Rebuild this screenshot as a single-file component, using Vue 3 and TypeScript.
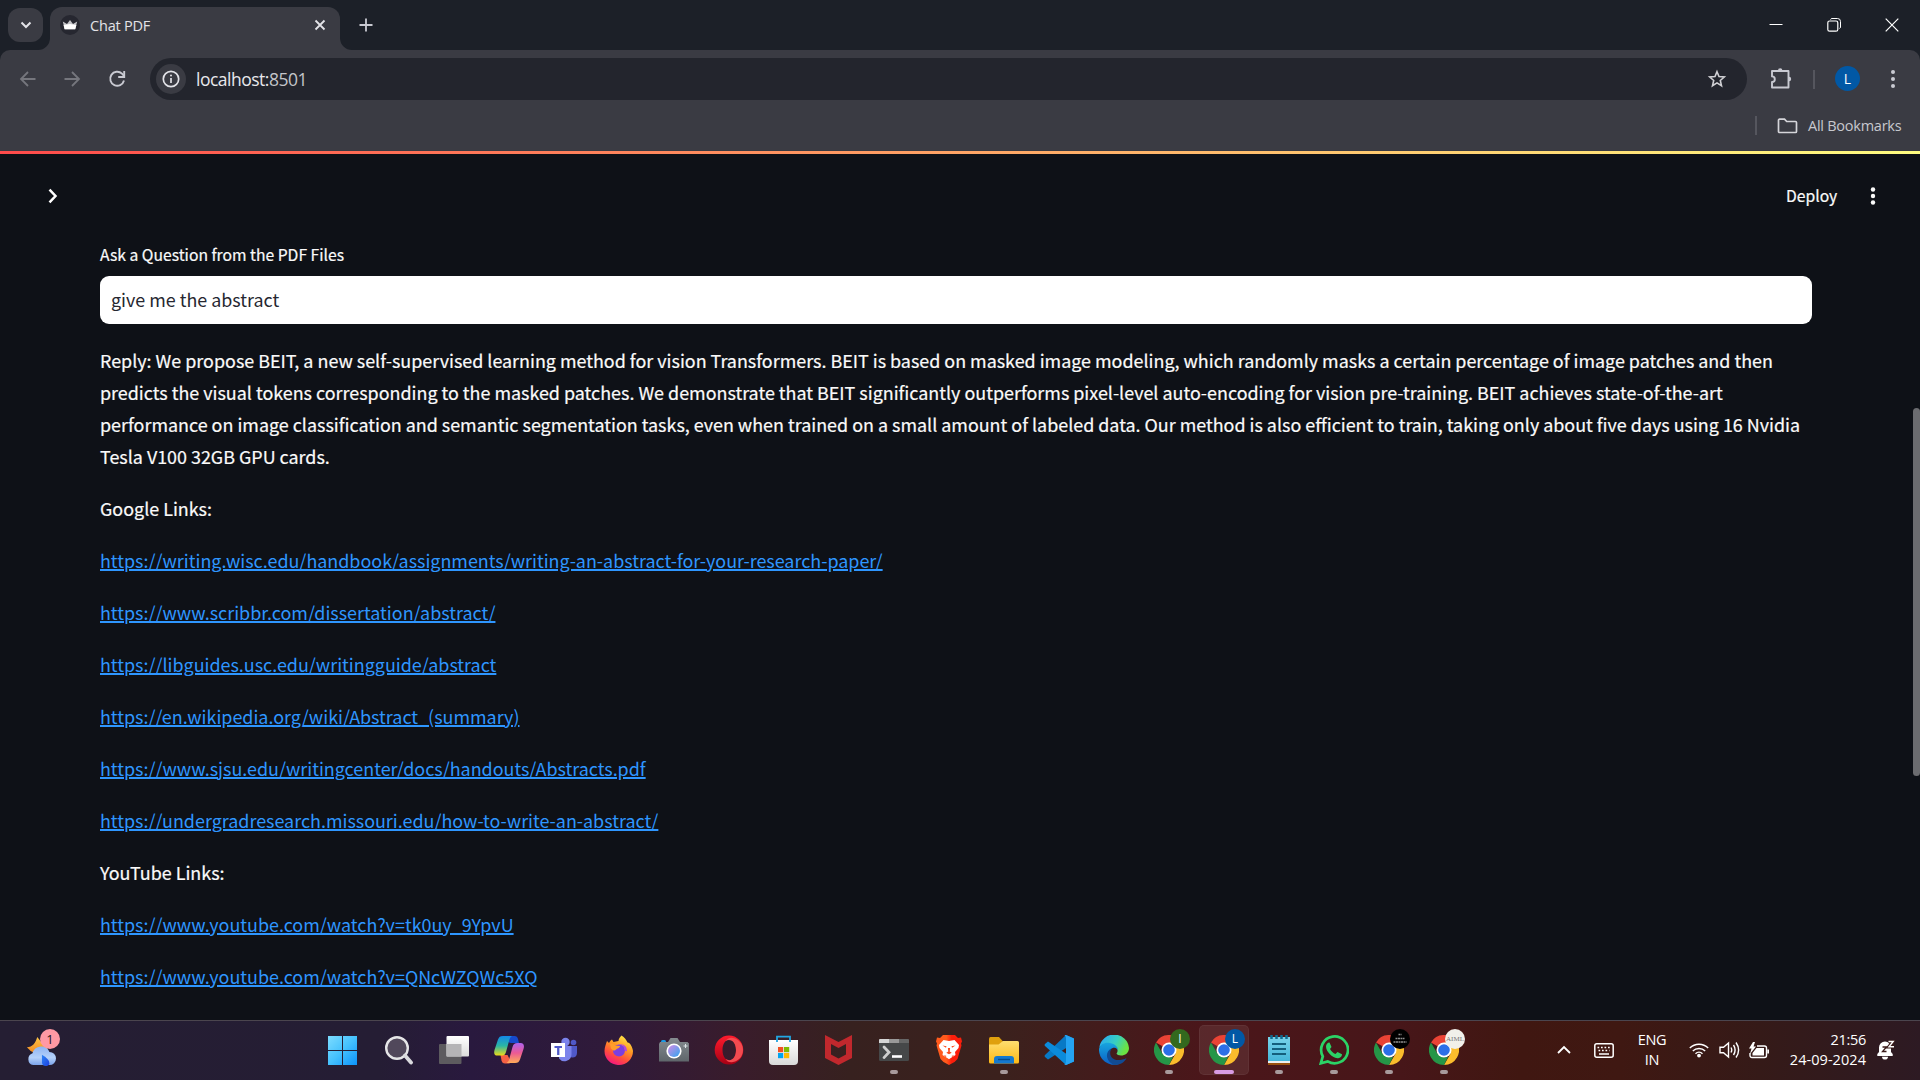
<script setup lang="ts">
const replyLines: string[] = [
  'Reply: We propose BEIT, a new self-supervised learning method for vision Transformers. BEIT is based on masked image modeling, which randomly masks a certain percentage of image patches and then',
  'predicts the visual tokens corresponding to the masked patches. We demonstrate that BEIT significantly outperforms pixel-level auto-encoding for vision pre-training. BEIT achieves state-of-the-art',
  'performance on image classification and semantic segmentation tasks, even when trained on a small amount of labeled data. Our method is also efficient to train, taking only about five days using 16 Nvidia',
  'Tesla V100 32GB GPU cards.',
]

const googleLinks: string[] = [
  'https://writing.wisc.edu/handbook/assignments/writing-an-abstract-for-your-research-paper/',
  'https://www.scribbr.com/dissertation/abstract/',
  'https://libguides.usc.edu/writingguide/abstract',
  'https://en.wikipedia.org/wiki/Abstract_(summary)',
  'https://www.sjsu.edu/writingcenter/docs/handouts/Abstracts.pdf',
  'https://undergradresearch.missouri.edu/how-to-write-an-abstract/',
]

const youtubeLinks: string[] = [
  'https://www.youtube.com/watch?v=tk0uy_9YpvU',
  'https://www.youtube.com/watch?v=QNcWZQWc5XQ',
]

interface TaskApp {
  icon: string
  state?: 'running' | 'active'
  badge?: { kind: string; text: string }
}

const apps: TaskApp[] = [
  { icon: 'windows' },
  { icon: 'search' },
  { icon: 'taskview' },
  { icon: 'copilot' },
  { icon: 'teams' },
  { icon: 'firefox' },
  { icon: 'camera' },
  { icon: 'opera' },
  { icon: 'store' },
  { icon: 'mcafee' },
  { icon: 'terminal', state: 'running' },
  { icon: 'brave' },
  { icon: 'explorer', state: 'running' },
  { icon: 'vscode' },
  { icon: 'edge' },
  { icon: 'chrome', state: 'running', badge: { kind: 'green', text: 'I' } },
  { icon: 'chrome', state: 'active', badge: { kind: 'blue', text: 'L' } },
  { icon: 'notepad', state: 'running' },
  { icon: 'whatsapp', state: 'running' },
  { icon: 'chrome', state: 'running', badge: { kind: 'black', text: '' } },
  { icon: 'chrome', state: 'running', badge: { kind: 'white', text: 'AIML' } },
]
</script>

<template>
  <div class="screen">
    <div class="tabstrip">
      <div class="tab-search">
        <svg width="12" height="12" viewBox="0 0 12 12"><path d="M1.5 3.5 6 8l4.500-4.500" fill="none" stroke="#e3e3e8" stroke-width="2" /></svg>
      </div>
      <div class="tab">
        <svg class="flare left" width="12" height="12" viewBox="0 0 12 12"><path d="M12 0v12H0A12 12 0 0 0 12 0z" fill="#3a3b43" /></svg>
        <svg class="favicon" width="20" height="20" viewBox="0 0 20 20">
          <circle cx="10" cy="10" r="10" fill="#262730" />
          <path d="M2.800 6.500 7 9l3-4 3 4 4.200-2.500-2 7.700H4.600z" fill="#c4c4c8" />
          <path d="M3.600 10 10 9l6.400 1-1.200 4.200H4.600z" fill="#fff" />
        </svg>
        <span class="tab-title">Chat PDF</span>
        <svg class="tab-close" width="12" height="12" viewBox="0 0 12 12"><path d="m1.500 1.500 9 9m0-9-9 9" stroke="#e3e3e8" stroke-width="1.800" /></svg>
        <svg class="flare right" width="12" height="12" viewBox="0 0 12 12"><path d="M0 0v12h12A12 12 0 0 1 0 0z" fill="#3a3b43" /></svg>
      </div>
      <svg class="new-tab" width="14" height="14" viewBox="0 0 14 14"><path d="M7 .5v13M.5 7h13" stroke="#c9cad2" stroke-width="1.800" /></svg>
      <div class="window-controls">
        <svg width="14" height="14" viewBox="0 0 14 14"><path d="M.5 6.500h13" stroke="#fff" stroke-width="1" /></svg>
        <svg width="14" height="14" viewBox="0 0 14 14" fill="none" stroke="#fff"><path d="M3.500 1.500Q4 .5 5 .5h5.500a3 3 0 0 1 3 3V9q0 1-1 1.500" /><rect x=".8" y="3" width="10" height="10.200" rx="1.800" stroke-width="1.200" /></svg>
        <svg width="14" height="14" viewBox="0 0 14 14"><path d="m.7.7 12.600 12.600M13.300.7.700 13.300" stroke="#fff" stroke-width="1.200" /></svg>
      </div>
    </div>

    <div class="chrome-bars">
      <div class="toolbar">
        <svg class="nav" width="20" height="20" viewBox="0 0 20 20"><path d="M17.500 10H3.500M10 3l-7 7 7 7" fill="none" stroke="#75767d" stroke-width="1.800" /></svg>
        <svg class="nav" width="20" height="20" viewBox="0 0 20 20"><path d="M2.500 10h14M10 3l7 7-7 7" fill="none" stroke="#75767d" stroke-width="1.800" /></svg>
        <svg class="nav reload" width="20" height="20" viewBox="0 0 20 20"><path d="M17 11.500A7 7 0 1 1 15 4.600L17 7" fill="none" stroke="#c9cad2" stroke-width="1.900" /><path d="M17.200 2v6h-6" fill="none" stroke="#c9cad2" stroke-width="1.900" /></svg>
        <div class="omnibox">
          <div class="site-info">
            <svg width="18" height="18" viewBox="0 0 18 18"><circle cx="9" cy="9" r="7.700" fill="none" stroke="#e3e3e8" stroke-width="1.700" /><path d="M9 8v5" stroke="#e3e3e8" stroke-width="1.700" /><circle cx="9" cy="5.600" r="1" fill="#e3e3e8" /></svg>
          </div>
          <span class="url"><span class="host">localhost:</span>8501</span>
          <svg class="star" width="20" height="20" viewBox="0 0 20 20"><path d="m10 2.700 2 4.900 5.300.4-4 3.500 1.200 5.200-4.500-2.800-4.500 2.800 1.200-5.200-4-3.500 5.300-.4z" fill="none" stroke="#d0d0d4" stroke-width="1.600" /></svg>
        </div>
        <svg class="puzzle" width="22" height="22" viewBox="0 0 22 22"><path d="M3 4h15.500v16.500H2V15a2.500 2.500 0 0 0 0-5.600V4z" fill="none" stroke="#c9cad2" stroke-width="1.900" stroke-linejoin="round" /><path d="M8 3.500a2.200 2.200 0 0 1 4.400 0zM19 9.800a2.200 2.200 0 0 1 0 4.400z" fill="#c9cad2" /></svg>
        <div class="divider tool-divider"></div>
        <div class="avatar">L</div>
        <svg class="menu" width="6" height="20" viewBox="0 0 6 20" fill="#c9cad2"><circle cx="3" cy="3" r="2" /><circle cx="3" cy="10" r="2" /><circle cx="3" cy="17" r="2" /></svg>
      </div>
      <div class="bookmarks">
        <div class="divider"></div>
        <svg class="folder" width="21" height="16" viewBox="0 0 21 16"><path d="M2.500 1.200h5l2.200 2.300h8.800a1 1 0 0 1 1 1v9a1 1 0 0 1-1 1h-16a1 1 0 0 1-1-1v-11.300a1 1 0 0 1 1-1z" fill="none" stroke="#d5d5da" stroke-width="1.700" /></svg>
        <span class="bookmark-label">All Bookmarks</span>
      </div>
    </div>

    <main class="page">
      <div class="decoration"></div>
      <header class="app-header">
        <svg width="12" height="16" viewBox="0 0 12 16"><path d="m2.500 1.700 6 6.300-6 6.300" fill="none" stroke="#fff" stroke-width="2.500" /></svg>
        <span class="deploy">Deploy</span>
        <svg width="6" height="18" viewBox="0 0 6 18" fill="#fafafa"><circle cx="3" cy="2.500" r="2.200" /><circle cx="3" cy="9" r="2.200" /><circle cx="3" cy="15.500" r="2.200" /></svg>
      </header>
      <section class="content">
        <label class="field-label">Ask a Question from the PDF Files</label>
        <div class="field">give me the abstract</div>
        <p class="reply"><span v-for="(line, i) in replyLines" :key="i" class="line">{{ line }}</span></p>
        <p>Google Links:</p>
        <p v-for="link in googleLinks" :key="link"><a>{{ link }}</a></p>
        <p>YouTube Links:</p>
        <p v-for="link in youtubeLinks" :key="link"><a>{{ link }}</a></p>
      </section>
      <div class="scroll-thumb"></div>
    </main>

    <footer class="taskbar">
      <div class="weather">
        <svg width="32" height="32" viewBox="0 0 32 32">
          <defs>
            <linearGradient id="sun" x1="0" y1="0" x2="0" y2="1"><stop offset="0" stop-color="#fdc545" /><stop offset="1" stop-color="#f18a23" /></linearGradient>
            <linearGradient id="cloud" x1="0" y1="0" x2="0" y2="1"><stop offset="0" stop-color="#8fb4f2" /><stop offset=".6" stop-color="#b4d1fa" /><stop offset="1" stop-color="#7ba3ea" /></linearGradient>
            <linearGradient id="drop" x1="0" y1="0" x2="1" y2="1"><stop offset="0" stop-color="#2f86f5" /><stop offset="1" stop-color="#1a3fe0" /></linearGradient>
          </defs>
          <path d="M12 1 16 6l7-2v10L9 18l-4-2-4-4c6-.5 9-4 11-11z" fill="url(#sun)" />
          <path d="M7.500 31a6.500 6.500 0 0 1-.5-12.500A9.500 9.500 0 0 1 25 17a7 7 0 0 1 0 14z" fill="url(#cloud)" />
          <path d="M17 20c5 3 8 6 8 9 0 2-2 3-4 3s-4-1-4-4z" fill="url(#drop)" />
        </svg>
        <span class="count">1</span>
      </div>

      <div class="apps">
        <div v-for="(app, i) in apps" :key="i" class="app" :class="app.state">
          <svg v-if="app.icon === 'windows'" width="30" height="30" viewBox="0 0 30 30">
            <defs><linearGradient id="win" x1="0" y1="0" x2="1" y2="1"><stop offset="0" stop-color="#7ddcff" /><stop offset=".5" stop-color="#45c1fd" /><stop offset="1" stop-color="#0c93fb" /></linearGradient></defs>
            <path d="M1 1h14v14H1zM16 1h14v14H16zM1 16h14v14H1zM16 16h14v14H16z" fill="url(#win)" />
          </svg>
          <svg v-else-if="app.icon === 'search'" width="30" height="30" viewBox="0 0 30 30">
            <circle cx="13" cy="13" r="10.800" fill="#51485b" stroke="#e5e5e7" stroke-width="2.400" /><path d="m21 20.500 6 7" stroke="#dadade" stroke-width="3.800" stroke-linecap="round" />
          </svg>
          <svg v-else-if="app.icon === 'taskview'" width="30" height="30" viewBox="0 0 30 30">
            <defs><linearGradient id="tv" x1="0" y1="0" x2="0" y2="1"><stop offset="0" stop-color="#fff" /><stop offset="1" stop-color="#dcdcdc" /></linearGradient></defs>
            <rect x="0" y="9" width="22.500" height="20" rx="1" fill="#5d5b5f" /><rect x="7.500" y="1" width="22.500" height="20.500" rx="1" fill="url(#tv)" /><path d="M7.500 9h15v12.500h-15z" fill="#b5b4b6" />
          </svg>
          <svg v-else-if="app.icon === 'copilot'" width="30" height="30" viewBox="0 0 30 30">
            <defs>
              <linearGradient id="cpa" x1="0" y1="0" x2="0" y2="1"><stop offset="0" stop-color="#1388e8" /><stop offset=".5" stop-color="#2ab5a5" /><stop offset="1" stop-color="#eadc19" /></linearGradient>
              <linearGradient id="cpb" x1="0" y1="0" x2="0" y2="1"><stop offset="0" stop-color="#ae62ee" /><stop offset=".5" stop-color="#ec5a94" /><stop offset="1" stop-color="#ffad58" /></linearGradient>
            </defs>
            <path d="M14 1h6.500c2 0 3 1 3.500 3l1 4h-8c-2 0-3-1-3.500-3z" fill="#1649cc" />
            <path d="M15.500 28.500H11c-2 0-3-1-3.500-3L6.500 20h7l3 6z" fill="#f56144" />
            <path d="M9 1h9c-2 1-2.500 3-3 5l-3 11c-1 3-2 3.500-5 3.500H3.500C0 20.500-.2 18 .5 15L4 4.500C5 2 6 1 9 1z" fill="url(#cpa)" />
            <path d="M21 28H12.500c2-1 2.500-3 3-5l3-11c1-3 2-4 5-4h3c3.500 0 4 3 3 6L26 24.500C25 27 24 28 21 28z" fill="url(#cpb)" />
          </svg>
          <svg v-else-if="app.icon === 'teams'" width="30" height="30" viewBox="0 0 30 30">
            <circle cx="16.500" cy="7" r="4.200" fill="#7b83eb" /><circle cx="24.500" cy="7.500" r="2.800" fill="#5059c9" />
            <path d="M19 11h9v7c0 3-2 4.500-4.500 4.500S19 21 19 18z" fill="#5059c9" /><path d="M10 11h12.500v8a7 7 0 0 1-12.500 4.500z" fill="#7b83eb" />
            <path d="M2 8h14v14H2z" fill="#fff" /><path d="M5.500 11h7.500v2h-2.600v7H8.100v-7H5.500z" fill="#5059c9" />
          </svg>
          <svg v-else-if="app.icon === 'firefox'" width="30" height="30" viewBox="0 0 30 30">
            <defs><linearGradient id="fx" x1=".8" y1="0" x2=".3" y2="1"><stop offset="0" stop-color="#fff04a" /><stop offset=".4" stop-color="#ff9a24" /><stop offset=".7" stop-color="#ff4f3c" /><stop offset="1" stop-color="#f51482" /></linearGradient></defs>
            <path d="M17.500.5c3 2 5 4.500 6 7 2-.5 5 4 5.500 8.500a14 14 0 0 1-14 14A14 14 0 0 1 .5 16c0-4 1.500-7 2.500-10l2 2c1-2 2-3 3-3.500L9.500 7l5-1c0-2 1.500-4 3-5.500z" fill="url(#fx)" />
            <circle cx="15" cy="15.500" r="6" fill="#7b3fe0" /><path d="M6 9c2-1 4 0 5 1.500l5 .5c0 2-3 2.500-4 3.500-1 2-3.500 1-5-1z" fill="#ff9e2b" /><path d="M15 9.500c4 0 6 3 5.500 6l2.500 1c0-5-3-8-8-7z" fill="#b347df" />
          </svg>
          <svg v-else-if="app.icon === 'camera'" width="30" height="30" viewBox="0 0 30 30">
            <defs><linearGradient id="cam" x1="0" y1="0" x2="0" y2="1"><stop offset="0" stop-color="#858b90" /><stop offset="1" stop-color="#5f666b" /></linearGradient><linearGradient id="lens" x1="0" y1="0" x2="1" y2="1"><stop offset=".2" stop-color="#b490e8" /><stop offset="1" stop-color="#2fa5ef" /></linearGradient></defs>
            <rect x="2" y="5" width="5" height="4" rx="1.500" fill="#1b9be6" /><path d="M9 7l2.500-4h7L21 7h7.500L30 8.500v18H0V9l1-2z" fill="url(#cam)" />
            <circle cx="15" cy="16" r="7.600" fill="#fff" /><circle cx="15" cy="16" r="6" fill="url(#lens)" /><path d="M26.500 9v4m-2-2h4" stroke="#dce2e6" />
          </svg>
          <svg v-else-if="app.icon === 'opera'" width="30" height="30" viewBox="0 0 30 30">
            <defs><linearGradient id="op" x1="0" y1="0" x2="0" y2="1"><stop offset="0" stop-color="#ff1b2d" /><stop offset="1" stop-color="#a70014" /></linearGradient></defs>
            <path fill-rule="evenodd" d="M15 .5a14.300 14.500 0 1 0 0 29 14.300 14.500 0 0 0 0-29zM15.500 4.500c4 0 6.500 4.500 6.500 10.500s-2.500 10.500-6.500 10.500S8.500 21 8.500 15 11.500 4.500 15.500 4.500z" fill="url(#op)" />
            <path d="M11.500 6C13 3.500 16 2 19 3c6 1 10 6 10 12s-4 11-10 12c-3 1-6-.5-7.500-3 6 3.500 10.500-1.500 10.500-9s-5-12-10.500-9z" fill="#f34b50" />
          </svg>
          <svg v-else-if="app.icon === 'store'" width="30" height="30" viewBox="0 0 30 30">
            <defs><linearGradient id="bag" x1="0" y1="0" x2="0" y2="1"><stop offset="0" stop-color="#fff" /><stop offset="1" stop-color="#d9d9d9" /></linearGradient></defs>
            <path d="M0 5h29v21a4 4 0 0 1-4 4H4a4 4 0 0 1-4-4z" fill="url(#bag)" /><path d="M8 7V1.700h13V7" fill="none" stroke="#22a6e2" stroke-width="1.800" />
            <path d="M9 12h5.200v5.200H9z" fill="#f25022" /><path d="M15 12h5.200v5.200H15z" fill="#7fba00" /><path d="M9 18h5.200v5.200H9z" fill="#00a4ef" /><path d="M15 18h5.200v5.200H15z" fill="#ffb900" />
          </svg>
          <svg v-else-if="app.icon === 'mcafee'" width="30" height="30" viewBox="0 0 30 30">
            <path d="M1 0 14.500 7 28 0v23L14.500 30 1 23zM7 9v10.500l7.500 4 7.500-4V9l-7.500 4z" fill="#c1282d" fill-rule="evenodd" />
          </svg>
          <svg v-else-if="app.icon === 'terminal'" width="30" height="30" viewBox="0 0 30 30">
            <rect y="4" width="30" height="22" rx="1.500" fill="#464849" /><path d="M0 8V5q0-1 1-1h9v4z" fill="#d5d5d5" /><path d="M10 4h10v4H10z" fill="#999" /><path d="M20 4h9q1 0 1 1v3H20z" fill="#666" />
            <path d="m5 12 5 5.300-5 5.300" fill="none" stroke="#cfcfcf" stroke-width="2.800" stroke-linecap="round" /><path d="M13 21.500h10" stroke="#fff" stroke-width="2.600" />
          </svg>
          <svg v-else-if="app.icon === 'brave'" width="30" height="30" viewBox="0 0 30 30">
            <defs><linearGradient id="br"><stop offset=".4" stop-color="#ff5a1c" /><stop offset=".6" stop-color="#fb1e0c" /></linearGradient></defs>
            <path d="M9 0h12l3 3 3-.5 1 4-1 2 .5 2-4 13.500-3 3L15 30l-5.500-3-3-3L2.500 10.500 3 8.500 2 6.500l1-4L6 3z" fill="url(#br)" />
            <path d="m9.500 5 5.500 1 5.500-1 4.500 5-.5 3-3.500 4 .5 3-5.500 3.500-1 .7-1-.7L8.500 20l.5-3-3.500-4L5 10z" fill="#fff" />
            <path d="m8.500 10.500 4 .7-.5 1.500zM21.500 10.500l-4 .7.5 1.500zM13.900 13h2.200l-.4 3.500 2 1.200-2.700 1.600-2.700-1.600 2-1.200zM10 20l2.500 1-1 1zM20 20l-2.500 1 1 1z" fill="#fb4a1a" />
          </svg>
          <svg v-else-if="app.icon === 'explorer'" width="30" height="30" viewBox="0 0 30 30">
            <defs><linearGradient id="fold" x1="0" y1="0" x2="0" y2="1"><stop offset="0" stop-color="#ffde70" /><stop offset="1" stop-color="#fcb917" /></linearGradient></defs>
            <path d="M0 4q0-2 1.500-2H10l4 4.500L10 11H0z" fill="#dfa00e" /><path d="M0 9.500h9.500L14 6h14.500Q30 6 30 7.500V27q0 1.500-1.500 1.500h-27Q0 28.500 0 27z" fill="url(#fold)" />
            <path d="M5 28.500V24q0-3 3-3h14q3 0 3 3v4.500z" fill="#1479cf" /><path d="M9 24.500h12" stroke="#064d8e" stroke-width="1.400" />
          </svg>
          <svg v-else-if="app.icon === 'vscode'" width="30" height="30" viewBox="0 0 30 30">
            <path d="M22 0 30 3.500V8L4 24.500 1 22Q0 21 1 20z" fill="#0879c5" /><path d="M4 6.500 30 24v2.500L22 30 1 11Q0 10 1 9z" fill="#0b8bdb" /><path d="M20.500 0 22 0l8 3.500v23L22 30l-2-.5q2-.5 2-3v-23Q22 1 20.500 0z" fill="#25a4f3" />
          </svg>
          <svg v-else-if="app.icon === 'edge'" width="30" height="30" viewBox="0 0 30 30">
            <defs>
              <linearGradient id="eda" x1="0" y1="0" x2="1" y2=".4"><stop offset=".2" stop-color="#2cb2e8" /><stop offset=".6" stop-color="#38cfc0" /><stop offset="1" stop-color="#6be243" /></linearGradient>
              <linearGradient id="edb" x1="0" y1="0" x2="0" y2="1"><stop offset="0" stop-color="#16a5df" /><stop offset="1" stop-color="#0c5ec4" /></linearGradient>
            </defs>
            <path d="M.3 12A15 15 0 0 1 30 13c0 5-4 7.500-8 7.500-2.500 0-4-1-4.500-2 2-2 1.500-6.500-3.500-7.500S3 9.500.300 12z" fill="url(#eda)" />
            <path d="M0 14c1-5 6-7 11-6 5 1 8 4 8 7-4-5-10-.5-8.500 5.500C11.500 26 16 29.500 20 29A15 15 0 0 1 0 14z" fill="url(#edb)" />
            <path d="M13 13c-4 5-1 12 6 12 3 0 6-.5 8.500-2-2 4.500-7 7.300-12 7C7 27 5 17 13 13z" fill="#114b93" />
          </svg>
          <svg v-else-if="app.icon === 'chrome'" width="30" height="30" viewBox="0 0 30 30">
            <path d="M15 15 2 7.500A15 15 0 0 1 28 7.500z" fill="#ea4335" /><path d="M15 0A15 15 0 0 1 28 7.500H15z" fill="#ea4335" /><path d="M15 7.500h13A15 15 0 0 1 15 30l6.500-11.200z" fill="#fbbc2c" /><path d="M2 7.500 8.500 18.700l6.500 3.800 4-.5L15 30A15 15 0 0 1 2 7.500z" fill="#259647" />
            <circle cx="15" cy="15" r="7.500" fill="#fff" /><circle cx="15" cy="15" r="5.800" fill="#2c6fe8" />
          </svg>
          <svg v-else-if="app.icon === 'notepad'" width="30" height="30" viewBox="0 0 30 30">
            <defs><linearGradient id="np" x1="0" y1="0" x2="0" y2="1"><stop offset="0" stop-color="#78d3ea" /><stop offset="1" stop-color="#45b6d9" /></linearGradient></defs>
            <path d="M4 27h22v3H4z" fill="#99500e" /><path d="M4 25h22v3H4z" fill="#eee" /><path d="M4 2h22v24H4z" fill="url(#np)" /><path d="M7.500 0v4m5-4v4m5-4v4m5-4v4" stroke="#106c91" stroke-width="2.500" /><path d="M8 9h14M8 14h14M8 19h14" stroke="#145f7c" stroke-width="2" />
          </svg>
          <svg v-else width="30" height="30" viewBox="0 0 30 30">
            <path d="m1.800 28.300 2-7A13.400 13.400 0 1 1 8.700 26.400z" fill="none" stroke="#2bd366" stroke-width="2.700" /><path d="M10.500 7.500 12.500 12l-1.500 2c1.500 2.500 3 4 5.500 5l2-2 4.500 2.200c0 2.800-2.500 4-4.500 4C12.500 22.500 7 16 7 11.500c0-2 1.500-4 3.500-4z" fill="#2bd366" />
          </svg>
          <span v-if="app.badge" class="badge" :class="app.badge.kind">
            <template v-if="app.badge.kind !== 'black'">{{ app.badge.text }}</template>
            <svg v-else width="20" height="20" viewBox="0 0 20 20"><path d="M8.500 5.500h3M5.500 9.500h9M3.500 13h13" stroke="#8f8f8f" stroke-width="1.300" stroke-dasharray="2 .5" /></svg>
          </span>
          <i v-if="app.state" class="indicator"></i>
        </div>
      </div>

      <div class="tray">
        <svg class="caret" width="14" height="10" viewBox="0 0 14 10"><path d="m1 8 6-6 6 6" fill="none" stroke="#fff" stroke-width="1.800" /></svg>
        <svg class="keyboard" width="20" height="15" viewBox="0 0 20 15"><rect x=".8" y=".8" width="18.400" height="13.400" rx="2" fill="none" stroke="#fff" stroke-width="1.500" /><path d="M3.500 4.500h13M4.500 7.500h11" stroke="#fff" stroke-width="1.700" stroke-dasharray="1.700 1.800" /><path d="M5 11h10" stroke="#fff" stroke-width="1.500" /></svg>
        <div class="lang"><span>ENG</span><span>IN</span></div>
        <svg class="wifi" width="20" height="16" viewBox="0 0 20 16"><path d="M.8 6a13 13 0 0 1 18.400 0M3.800 9a8.800 8.800 0 0 1 12.400 0M6.500 11.700a5 5 0 0 1 7 0" fill="none" stroke="#fff" stroke-width="1.400" /><circle cx="10" cy="13.600" r="1.900" fill="#fff" /></svg>
        <svg class="volume" width="21" height="18" viewBox="0 0 21 18" fill="none" stroke="#fff" stroke-width="1.400"><path d="M1 6.200h3.500L9.500 2v14l-5-4.200H1z" /><path d="M12 6.500q1.500 2.500 0 5M14.500 4q3.200 5 0 10M17 1.500q5.200 7.500 0 15" /></svg>
        <svg class="battery" width="20" height="17" viewBox="0 0 20 17"><path d="M8 4h7.500a2 2 0 0 1 2 2v7.500a2 2 0 0 1-2 2H3a2 2 0 0 1-2-2V11" fill="none" stroke="#fff" stroke-width="1.400" /><path d="M7.500 6H15v7.500H3.500V11zM18.300 7.500H20v4h-1.700z" fill="#fff" /><path d="M4 0 0 6.500h2.500L1 12l6-7.500H4.500L6 0z" fill="#fff" /></svg>
        <div class="clock"><span>21:56</span><span class="date">24-09-2024</span></div>
        <svg class="bell" width="18" height="20" viewBox="0 0 18 20"><path d="M8 1.500a6 6 0 0 0-6 6V12L.3 14v2h15.400v-2L14 12V7.500a6 6 0 0 0-6-6zM5 16.800a3 2.800 0 0 0 6 0z" fill="#fff" /><path d="M11.500 1.500h4.700L12 6.800h5" fill="none" stroke="#3a1a19" stroke-width="3.600" /><path d="M11.500 1.500h4.700L12 6.800h5" fill="none" stroke="#fff" stroke-width="1.400" /><path d="M5.500 7h4l-4 4.500h4" fill="none" stroke="#3a1a19" stroke-width="1.300" /></svg>
      </div>
    </footer>
  </div>
</template>

<style>
body {
  margin: 0;
  background: #0e1117;
  overflow: hidden;
}
</style>

<style scoped>
.screen {
  width: 1920px;
  height: 1080px;
  display: flex;
  flex-direction: column;
  overflow: hidden;
  background: #1c2028;
  font-family: "Open Sans", "Noto Sans", sans-serif;
}
svg {
  display: block;
  flex: none;
}
.tabstrip {
  height: 50px;
  display: flex;
  align-items: center;
  flex: none;
}
.tab-search {
  width: 35px;
  height: 34px;
  margin-left: 8px;
  border-radius: 12px;
  background: #3a3b43;
  display: flex;
  align-items: center;
  justify-content: center;
}
.tab {
  position: relative;
  width: 290px;
  height: 43px;
  margin: 7px 0 0 7px;
  box-sizing: border-box;
  padding: 0 14px 7px 10px;
  border-radius: 12px 12px 0 0;
  background: #3a3b43;
  display: flex;
  align-items: center;
}
.flare {
  position: absolute;
  bottom: 0;
}
.flare.left {
  left: -12px;
}
.flare.right {
  right: -12px;
}
.tab-title {
  margin-left: 10px;
  font-size: 14.5px;
  letter-spacing: -0.2px;
  color: #e3e3e8;
  white-space: nowrap;
}
.tab-close {
  margin-left: auto;
}
.new-tab {
  margin-left: 18.5px;
}
.window-controls {
  margin: 0 21px 0 auto;
  display: flex;
  gap: 44px;
}
.chrome-bars {
  height: 101px;
  flex: none;
  background: #3a3b43;
  border-radius: 10px 10px 0 0;
}
.toolbar {
  height: 58px;
  display: flex;
  align-items: center;
  padding-left: 18px;
}
.nav {
  margin-right: 24px;
}
.nav.reload {
  margin-left: 1px;
  margin-right: 23px;
}
.omnibox {
  width: 1597px;
  height: 42px;
  box-sizing: border-box;
  padding: 0 20px 0 6px;
  border-radius: 21px;
  background: #23252d;
  display: flex;
  align-items: center;
}
.site-info {
  width: 30px;
  height: 30px;
  border-radius: 50%;
  background: #3a3b43;
  display: flex;
  align-items: center;
  justify-content: center;
}
.url {
  margin: -1px 0 0 10px;
  font-size: 17.5px;
  letter-spacing: -0.5px;
  color: #c4c5ca;
}
.host {
  color: #e8e8ec;
}
.star {
  margin-left: auto;
}
.puzzle {
  margin-left: 23px;
  margin-top: -2px;
}
.divider {
  width: 2px;
  height: 19px;
  background: #55565e;
}
.tool-divider {
  margin-left: 21px;
}
.avatar {
  width: 25px;
  height: 25px;
  margin: -1px 0 0 20px;
  border-radius: 50%;
  background: #0158a5;
  color: #fff;
  font-size: 14px;
  line-height: 25px;
  text-align: center;
}
.menu {
  margin-left: 29.5px;
}
.bookmarks {
  height: 35px;
  display: flex;
  align-items: center;
  justify-content: flex-end;
  padding-right: 18px;
}
.folder {
  margin-left: 20px;
}
.bookmark-label {
  width: 94px;
  margin-left: 10px;
  font-size: 14.5px;
  letter-spacing: -0.25px;
  white-space: nowrap;
  color: #c7c8ce;
}
.page {
  position: relative;
  height: 869px;
  flex: none;
  background: #0e1117;
  color: #fafafa;
  font-family: "Noto Sans CJK SC", "Noto Sans", sans-serif;
}
.decoration {
  height: 3px;
  background: linear-gradient(90deg, #ff4b4b, #fffd80);
}
.app-header {
  height: 84px;
  box-sizing: border-box;
  padding: 0 44.5px 0 47px;
  display: flex;
  align-items: center;
}
.deploy {
  width: 51px;
  margin: -1px 32.5px 0 auto;
  font-size: 15.7px;
  white-space: nowrap;
  -webkit-text-stroke: 0.2px currentColor;
}
.content {
  padding: 4px 108px 0 100px;
}
.field-label {
  display: block;
  height: 34px;
  font-size: 15.7px;
  line-height: 26px;
  -webkit-text-stroke: 0.2px currentColor;
}
.field {
  height: 48px;
  box-sizing: border-box;
  padding-left: 11px;
  border-radius: 9px;
  background: #fff;
  color: #262730;
  font-size: 17.9px;
  line-height: 46px;
}
p {
  margin: 0 0 20px;
  font-size: 17.915px;
  line-height: 32px;
  white-space: nowrap;
  -webkit-text-stroke: 0.2px currentColor;
}
.reply {
  margin-top: 20px;
}
.line {
  display: block;
}
a {
  color: #2e96ff;
  text-decoration: underline 2px;
  text-underline-offset: 1px;
  -webkit-text-stroke: 0;
}
.scroll-thumb {
  position: absolute;
  right: 0;
  top: 257px;
  width: 7px;
  height: 368px;
  border-radius: 4px;
  background: #6b6c70;
}
.taskbar {
  height: 60px;
  box-shadow: inset 0 1px #4b454e;
  display: flex;
  align-items: center;
  background: linear-gradient(90deg, #251e33 0, #251d34 380px, #29193e 470px, #301a39 620px, #391c2b 740px, #37211f 850px, #3b211d 1000px, #431c1c 1100px, #4b161a 1210px, #471619 1400px, #401711 1520px, #3f1812 1620px, #351a18 1760px, #2d1a23 1920px);
}
.weather {
  position: relative;
  width: 34px;
  height: 36px;
  margin-left: 26px;
}
.weather > svg {
  margin-top: 3px;
  width: 30px;
}
.count {
  position: absolute;
  right: 0;
  top: -3px;
  width: 20px;
  height: 20px;
  border-radius: 50%;
  background: #ff99a4;
  color: #1c1518;
  font-size: 13px;
  line-height: 20px;
  text-align: center;
}
.apps {
  display: flex;
  gap: 5px;
  margin-left: 257px;
}
.app {
  position: relative;
  width: 50px;
  height: 50px;
  box-sizing: border-box;
  border-radius: 5px;
  display: flex;
  align-items: center;
  justify-content: center;
}
.app:first-child {
  margin-right: 2px;
}
.app.active {
  background: rgba(255, 255, 255, 0.08);
  box-shadow: inset 0 0 0 1px rgba(255, 255, 255, 0.05);
}
.indicator {
  position: absolute;
  bottom: 1px;
  left: 21px;
  width: 8px;
  height: 4px;
  border-radius: 2px;
  background: #a89a9c;
}
.active .indicator {
  left: 15px;
  width: 20px;
  background: #d89be3;
}
.badge {
  position: absolute;
  left: 26px;
  top: 4px;
  width: 20px;
  height: 20px;
  border-radius: 50%;
  font-size: 12px;
  line-height: 20px;
  text-align: center;
  color: #fff;
  overflow: hidden;
}
.green {
  background: #33691e;
}
.blue {
  background: #0158a5;
}
.black {
  background: #000;
}
.white {
  background: #f1f0ea;
  color: #777;
  font: 7px/20px "Liberation Serif", serif;
}
.tray {
  margin-left: auto;
  padding-right: 25px;
  display: flex;
  align-items: center;
  color: #fff;
  font-size: 14.5px;
  line-height: 20px;
  letter-spacing: -0.3px;
}
.keyboard {
  margin-left: 23px;
}
.lang {
  width: 30px;
  margin-left: 23px;
  display: flex;
  flex-direction: column;
  align-items: center;
}
.wifi {
  margin-left: 22px;
}
.volume {
  margin-left: 10px;
}
.battery {
  margin-left: 9px;
}
.clock {
  width: 90px;
  margin-left: 7px;
  display: flex;
  flex-direction: column;
  align-items: flex-end;
}
.date {
  letter-spacing: 0.05px;
}
.bell {
  margin-left: 11px;
}
</style>
